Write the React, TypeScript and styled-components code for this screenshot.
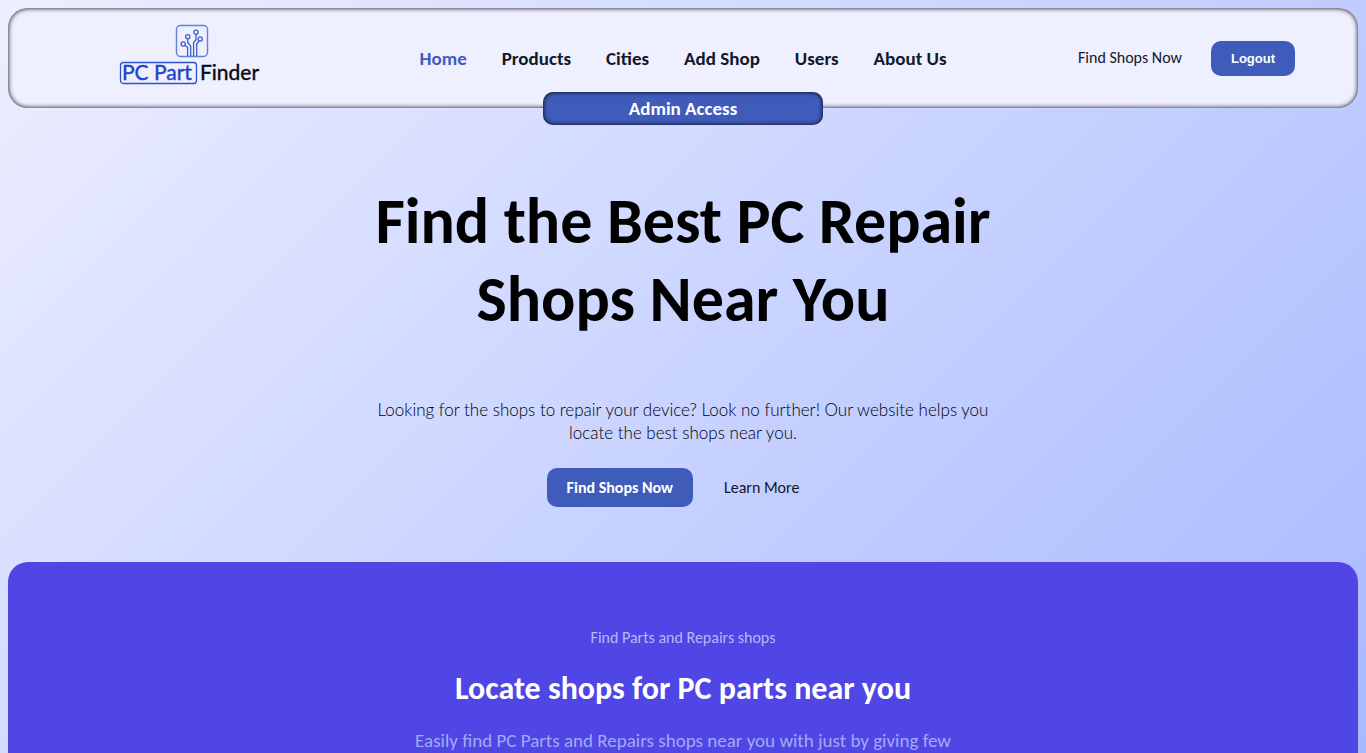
import React from "react";
import styled, { createGlobalStyle } from "styled-components";

const GlobalStyle = createGlobalStyle`
  * {
    box-sizing: border-box;
  }
  html {
    min-height: 100%;
    background: linear-gradient(135deg, #ecefff 0%, #dfe2ff 22%, #d5ddff 33%, #a8b9ff 100%) fixed;
  }
  body {
    margin: 0;
    padding: 8px;
    font-family: Carlito, Lato, "Liberation Sans", sans-serif;
    color: #000;
  }
`;

const Header = styled.header`
  position: relative;
  display: grid;
  grid-template-columns: 1fr auto 1fr;
  align-items: center;
  height: 100px;
  padding: 0 63px;
  border-radius: 20px;
  background: #eeefff;
  box-shadow: inset 0 0 5px #000;
`;

const LogoLink = styled.a`
  justify-self: start;
  display: block;
  height: 64px;
  margin: 0 0 9px 47px;
`;

const Nav = styled.nav`
  display: flex;
  gap: 35px;
  padding-top: 2px;
`;

const NavLink = styled.a<{ $active?: boolean }>`
  font-size: 19px;
  line-height: 24px;
  font-weight: 700;
  text-decoration: none;
  color: ${(p) => (p.$active ? "#405cbb" : "#111827")};
`;

const Actions = styled.div`
  display: flex;
  justify-content: flex-end;
  align-items: center;
  gap: 9px;
`;

const TextLink = styled.a`
  padding: 0 20px;
  font-size: 16px;
  line-height: 20px;
  color: #111827;
  text-decoration: none;
`;

const Button = styled.button<{ $plain?: boolean }>`
  padding: ${(p) => (p.$plain ? "9px 20px" : "10px 20px")};
  border: 0;
  border-radius: 10px;
  background: #405cbb;
  color: #fff;
  font-family: ${(p) => (p.$plain ? '"Liberation Sans", Arial, sans-serif' : "inherit")};
  font-size: ${(p) => (p.$plain ? "13px" : "16px")};
  line-height: ${(p) => (p.$plain ? "17px" : "19px")};
  font-weight: 700;
`;

const AdminBadge = styled.div`
  position: absolute;
  top: 84px;
  left: 50%;
  width: 280px;
  transform: translateX(-50%);
  border-radius: 10px;
  background: #405cbb;
  box-shadow: inset 0 0 5px #000;
  color: #fff;
  font-size: 19px;
  line-height: 33px;
  font-weight: 700;
  text-align: center;
`;

const Hero = styled.section`
  display: flex;
  flex-direction: column;
  align-items: center;
  max-width: 672px;
  margin: 0 auto;
  padding: 74px 0 55px;
  text-align: center;
`;

const Title = styled.h1`
  margin: 0 0 60px;
  font-size: 64px;
  line-height: 78px;
  font-weight: 700;
`;

const Lead = styled.p`
  max-width: 640px;
  margin: 0 0 24px;
  font-family: Lato, Carlito, sans-serif;
  font-size: 17px;
  line-height: 23px;
  font-weight: 300;
`;

const HeroActions = styled.div`
  display: flex;
  align-items: center;
  gap: 11px;
`;

const Locate = styled.section`
  display: flex;
  flex-direction: column;
  align-items: center;
  padding: 66px 16px;
  border-radius: 20px;
  background: #4f46e5;
  text-align: center;
`;

const Eyebrow = styled.p`
  margin: 0 0 24px;
  font-size: 16px;
  line-height: 20px;
  color: #b4b9f8;
`;

const SubTitle = styled.h2`
  margin: 0 0 23px;
  font-size: 32px;
  line-height: 34px;
  font-weight: 700;
  color: #fff;
`;

const Blurb = styled.p`
  max-width: 576px;
  margin: 0;
  font-size: 19px;
  line-height: 23px;
  color: #a3aaf5;
`;

const Logo = () => (
  <svg width="144" height="64" viewBox="0 0 144 64" fill="none" role="img" aria-label="PC Part Finder">
    <rect x="58.5" y="3.5" width="31" height="31" rx="4" stroke="#6580d8" strokeWidth="1.4" />
    <g stroke="#3f5dcb" strokeWidth="1.3">
      <circle cx="65.2" cy="22" r="2.1" />
      <circle cx="69.7" cy="14.8" r="2.1" />
      <circle cx="78" cy="10.3" r="2.1" />
      <circle cx="82.2" cy="17" r="2.1" />
      <path d="M67 23.3l2.6 2V34M69.7 17v3.5l3 3.5v10M78 12.5v5.2l-2.4 2.8V34M81 19l-2.3 3v12" />
    </g>
    <rect x="2.5" y="40.5" width="76" height="21" rx="3" stroke="#2f50c8" strokeWidth="1.3" />
    <text x="4" y="58" fontFamily="Lato, sans-serif" fontSize="21" fontWeight="400" fill="#2344c4" stroke="#2344c4" strokeWidth="0.4">
      PC Part
    </text>
    <text x="82" y="58" fontFamily="Lato, sans-serif" fontSize="21" fontWeight="400" fill="#080a14" stroke="#080a14" strokeWidth="0.4">
      Finder
    </text>
  </svg>
);

const links = ["Home", "Products", "Cities", "Add Shop", "Users", "About Us"];

export default function App() {
  return (
    <>
      <GlobalStyle />
      <Header>
        <LogoLink href="#">
          <Logo />
        </LogoLink>
        <Nav>
          {links.map((label, i) => (
            <NavLink key={label} href="#" $active={i === 0}>
              {label}
            </NavLink>
          ))}
        </Nav>
        <Actions>
          <TextLink href="#">Find Shops Now</TextLink>
          <Button type="button" $plain>
            Logout
          </Button>
        </Actions>
        <AdminBadge>Admin Access</AdminBadge>
      </Header>
      <main>
        <Hero>
          <Title>Find the Best PC Repair Shops Near You</Title>
          <Lead>
            Looking for the shops to repair your device? Look no further! Our website helps you locate the best shops
            near you.
          </Lead>
          <HeroActions>
            <Button type="button">Find Shops Now</Button>
            <TextLink href="#">Learn More</TextLink>
          </HeroActions>
        </Hero>
        <Locate>
          <Eyebrow>Find Parts and Repairs shops</Eyebrow>
          <SubTitle>Locate shops for PC parts near you</SubTitle>
          <Blurb>Easily find PC Parts and Repairs shops near you with just by giving few</Blurb>
        </Locate>
      </main>
    </>
  );
}
